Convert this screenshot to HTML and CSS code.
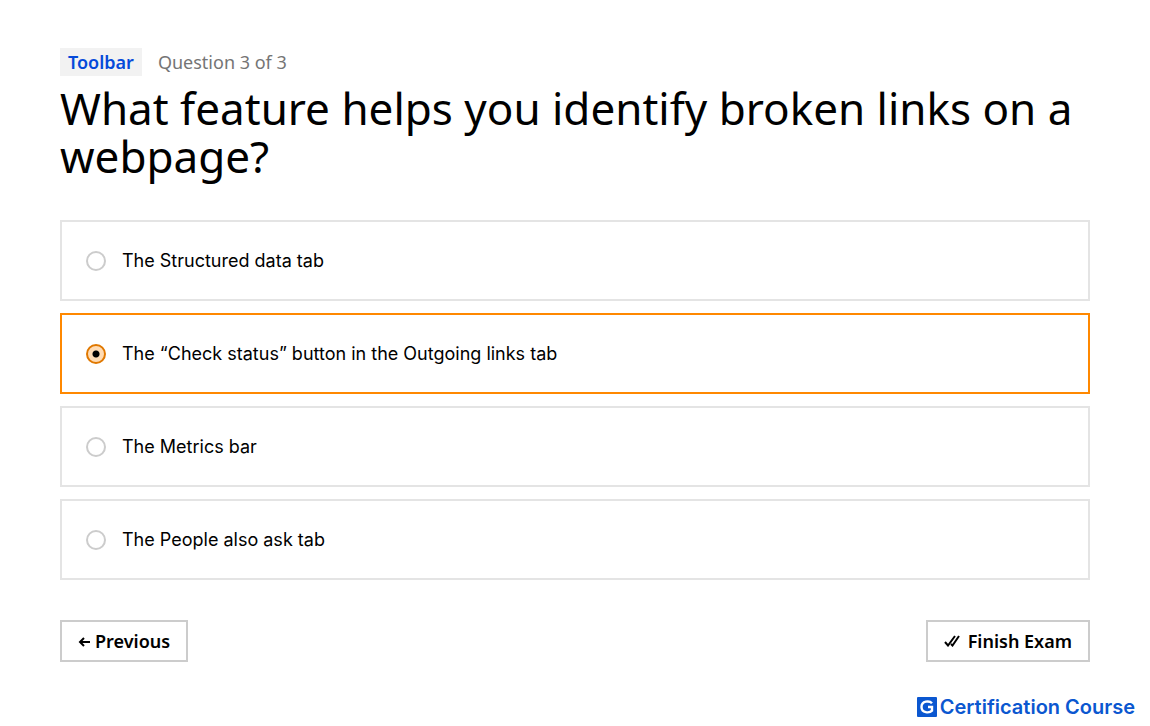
FILE: index.html
```html
<!DOCTYPE html>
<html lang="en">
  <head>
    <meta charset="utf-8">
    <meta name="viewport" content="width=device-width, initial-scale=1">

    <title>Certification Course</title>

    <link rel="stylesheet" href="styles.css">
  </head>

  <body>
    <form class="exam">
      <div class="exam-meta">
        <span class="topic">Toolbar</span>
        <span class="progress">Question 3 of 3</span>
      </div>
      <h1 class="question" id="question">What feature helps you identify broken links on a webpage?</h1>

      <div class="answers" role="radiogroup" aria-labelledby="question">
        <label class="answer">
          <input type="radio" name="answer" value="1">
          <span>The Structured data tab</span>
        </label>
        <label class="answer">
          <input type="radio" name="answer" value="2" checked>
          <span>The “Check status” button in the Outgoing links tab</span>
        </label>
        <label class="answer">
          <input type="radio" name="answer" value="3">
          <span>The Metrics bar</span>
        </label>
        <label class="answer">
          <input type="radio" name="answer" value="4">
          <span>The People also ask tab</span>
        </label>
      </div>

      <div class="exam-nav">
        <button type="button" class="btn btn-previous">
          <svg width="13" height="12" viewBox="0 0 13 12" aria-hidden="true">
            <path d="M12 7H2M6 3L2 7L6 11" />
          </svg>
          Previous
        </button>
        <button type="submit" class="btn btn-finish">
          <svg width="16" height="12" viewBox="0 0 16 12" aria-hidden="true">
            <path d="M1 7L4 10.5L11 1M7 9L8.5 10.5L15 1" />
          </svg>
          Finish Exam
        </button>
      </div>
    </form>

    <footer class="brand">
      <svg width="20" height="20" viewBox="0 0 20 20" aria-hidden="true">
        <rect width="20" height="20" rx="1" fill="#0b57d0" />
        <path d="M15 6.3C12.5 3.4 4.5 3.7 4.5 10C4.5 16.3 12.5 16.3 15 13.7V10H11" fill="none" stroke="#fff" stroke-width="2.4" />
      </svg>
      <span>Certification Course</span>
    </footer>
  </body>

</html>
```
FILE: styles.css
```css
* {
  box-sizing: border-box;
}

body {
  margin: 0;
  background-color: #fff;
  color: #000;
  font-family: Inter, sans-serif;
  font-size: 18px;
}

.exam {
  padding: 48px 60px 0;
}

.exam-meta {
  display: flex;
  align-items: center;
  gap: 16px;
  font-family: "Noto Sans", sans-serif;
  line-height: 28px;
}

.topic {
  padding: 0 8px;
  background-color: #f2f2f2;
  color: #054ada;
  font-weight: 600;
}

.progress {
  color: #757575;
}

.question {
  margin: 8px 0 40px;
  font-family: "Noto Sans", sans-serif;
  font-size: 44px;
  font-weight: 400;
  line-height: 48px;
}

.answers {
  display: grid;
  gap: 12px;
}

.answer {
  display: flex;
  align-items: center;
  gap: 16px;
  padding: 24px;
  border: 2px solid #e4e4e4;
  line-height: 29px;
  cursor: pointer;
}

.answer:has(input:checked) {
  border-color: #ff8800;
}

.answer input {
  appearance: none;
  width: 20px;
  height: 20px;
  margin: 0;
  border: 2px solid #ccc;
  border-radius: 50%;
  background-color: #fff;
}

.answer input:checked {
  border-color: #e07800;
  background: radial-gradient(circle, #000 3px, #ffdbb3 4px);
}

.exam-nav {
  display: flex;
  justify-content: space-between;
  margin-top: 40px;
}

.btn {
  display: flex;
  align-items: center;
  gap: 4px;
  padding: 7px 16px;
  border: 2px solid #ccc;
  background-color: #fff;
  color: #000;
  font-family: "Noto Sans", sans-serif;
  font-size: 18px;
  font-weight: 600;
  line-height: 24px;
  cursor: pointer;
}

.btn svg {
  fill: none;
  stroke: #000;
  stroke-width: 2;
}

.btn-finish {
  gap: 8px;
}

.brand {
  display: flex;
  justify-content: flex-end;
  align-items: center;
  gap: 3px;
  padding: 34px 15px 8px;
  color: #0b57d0;
  font-family: Inter, sans-serif;
  font-size: 20px;
  font-weight: 600;
  line-height: 22px;
}
```
